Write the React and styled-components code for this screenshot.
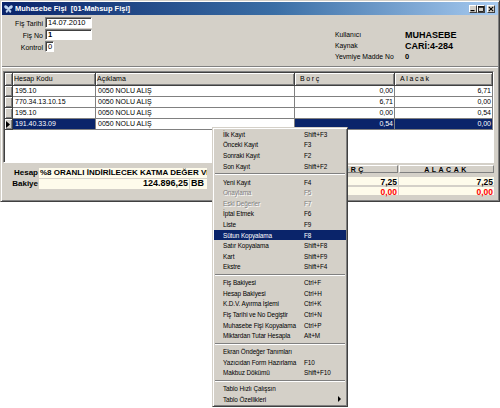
import React from 'react';
import styled, { createGlobalStyle } from 'styled-components';

const Global = createGlobalStyle`
  html, body { margin: 0; padding: 0; background: #fff; }
  body { font-family: "Liberation Sans", Arial, sans-serif; font-size: 7px; color: #000; }
  * { box-sizing: border-box; }
`;

const Page = styled.div`
  position: relative;
  width: 500px;
  height: 408px;
  background: #fff;
  overflow: hidden;
`;

const Window = styled.div`
  width: 500px;
  height: 202px;
  background: #d4d0c8;
  border: 1px solid;
  border-color: #d4d0c8 #404040 #404040 #d4d0c8;
  box-shadow: inset 1px 1px #fff, inset -1px -1px #808080;
  padding: 1px;
  display: flex;
  flex-direction: column;
`;

const TitleBar = styled.div`
  height: 13px;
  flex: none;
  display: flex;
  align-items: center;
  padding: 0 3px 0 2px;
  background: linear-gradient(to right, #0a246a 0%, #3a6ea5 55%, #a6caf0 100%);
`;

const TitleText = styled.span`
  color: #fff;
  font-weight: bold;
  font-size: 7.5px;
  margin-left: 2px;
  white-space: pre;
`;

const TitleButtons = styled.div`
  margin-left: auto;
  display: flex;
`;

const TitleButton = styled.div`
  width: 8px;
  height: 8px;
  margin-left: ${p => (p.$gap ? '2px' : '0')};
  background: #d4d0c8;
  border: 1px solid;
  border-color: #fff #404040 #404040 #fff;
  display: flex;
  align-items: center;
  justify-content: center;
`;

const FormPanel = styled.div`
  height: 53px;
  flex: none;
  display: grid;
  grid-template-columns: 333px 1fr;
  padding-top: 2px;
  border-bottom: 1px solid #fff;
  box-shadow: 0 -1px 0 #808080 inset;
`;

const FieldList = styled.div`
  display: grid;
  grid-template-columns: 41px auto;
  grid-auto-rows: 12px;
  column-gap: 2px;
  align-content: start;
  justify-items: start;
`;

const FieldLabel = styled.span`
  justify-self: end;
  align-self: center;
  line-height: 11px;
  font-size: 7px;
`;

const Input = styled.div`
  width: ${p => p.$w}px;
  height: 11px;
  background: #fff;
  border: 1px solid;
  border-color: #808080 #fff #fff #808080;
  box-shadow: inset 1px 1px #404040;
  padding: 0 0 0 2px;
  font-size: 7.5px;
  line-height: 10px;
  font-weight: ${p => (p.$bold ? 'bold' : 'normal')};
  white-space: nowrap;
`;

const InfoList = styled.div`
  display: grid;
  grid-template-columns: 70px auto;
  grid-auto-rows: 11px;
  margin-top: 12px;
  align-content: start;
  align-items: center;
`;

const InfoLabel = styled.span`
  font-size: 6.8px;
`;

const InfoValue = styled.span`
  font-weight: bold;
  font-size: ${p => p.$size || 9}px;
`;

const GridBox = styled.div`
  margin: 3px 4px 0 1px;
  height: 92px;
  flex: none;
  background: #fff;
  border: 1px solid;
  border-color: #808080 #fff #fff #808080;
  box-shadow: inset 1px 1px #404040;
  padding: 1px 0 0 1px;
  overflow: hidden;
`;

const GridRow = styled.div`
  display: grid;
  grid-template-columns: 8px 83px 199px 100px 98px;
  height: ${p => (p.$header ? 13 : 11)}px;
`;

const HeadCell = styled.div`
  background: #d4d0c8;
  border-right: 1px solid #404040;
  border-bottom: 1px solid #404040;
  box-shadow: inset 1px 1px #fff, inset -1px -1px #808080;
  padding-left: ${p => p.$pad || 2}px;
  letter-spacing: ${p => p.$ls || 0}px;
  font-size: 7px;
  line-height: 12px;
  white-space: nowrap;
  overflow: hidden;
`;

const Indicator = styled.div`
  background: #d4d0c8;
  border-right: 1px solid #404040;
  border-bottom: 1px solid #404040;
  box-shadow: inset 1px 1px #fff, inset -1px -1px #808080;
  display: flex;
  align-items: center;
  padding-left: 1px;
`;

const Cell = styled.div`
  background: ${p => (p.$sel ? '#0a246a' : '#fff')};
  color: ${p => (p.$sel ? '#fff' : '#000')};
  border-right: 1px solid #808080;
  border-bottom: 1px solid #808080;
  text-align: ${p => (p.$num ? 'right' : 'left')};
  padding: 0 ${p => (p.$num ? 1 : 0)}px 0 ${p => (p.$num ? 0 : 2)}px;
  font-size: 7px;
  line-height: 10px;
  white-space: nowrap;
  overflow: hidden;
`;

const BottomPanel = styled.div`
  flex: 1;
  display: flex;
  align-items: flex-start;
  padding: 0 4px 0 0;
`;

const AccountBlock = styled.div`
  margin-top: 5px;
  display: grid;
  grid-template-columns: 37px 168px;
  grid-auto-rows: 9.5px;
  row-gap: 1.5px;
  align-items: center;
`;

const SumLabel = styled.span`
  justify-self: end;
  font-weight: bold;
  font-size: 8px;
  padding-right: 1px;
`;

const InfoField = styled.div`
  height: 9.5px;
  background: #fefbeb;
  font-weight: bold;
  font-size: ${p => p.$size || 8}px;
  line-height: 9.5px;
  padding: 0 1px;
  white-space: nowrap;
  overflow: hidden;
  text-align: ${p => (p.$right ? 'right' : 'left')};
`;

const BalanceRow = styled.div`
  display: grid;
  grid-template-columns: 150px 17px;
  column-gap: 1px;
`;

const TotalsBlock = styled.div`
  margin: 2px 0 0 auto;
  display: grid;
  grid-template-columns: 95px 95px;
  column-gap: 1px;
  grid-template-rows: 10px 10px 10px;
`;

const TotalsHead = styled.div`
  background: #d4d0c8;
  border: 1px solid;
  border-color: #fff #808080 #808080 #fff;
  font-weight: bold;
  font-size: 7px;
  letter-spacing: 2.5px;
  text-align: center;
  line-height: 8px;
  margin-bottom: 2px;
`;

const TotalsValue = styled.div`
  background: #fefbeb;
  color: ${p => (p.$red ? '#ff0000' : '#000')};
  font-weight: bold;
  font-size: 8.5px;
  text-align: right;
  line-height: 10px;
  padding-right: 1px;
  margin-top: 2px;
`;

const Menu = styled.div`
  position: absolute;
  left: 212px;
  top: 127px;
  width: 136px;
  background: #d4d0c8;
  border: 1px solid;
  border-color: #d4d0c8 #404040 #404040 #d4d0c8;
  box-shadow: inset 1px 1px #fff, inset -1px -1px #808080;
  padding: 1px;
  display: flex;
  flex-direction: column;
`;

const MenuItem = styled.div`
  height: 10.6px;
  display: grid;
  grid-template-columns: 81px 1fr 8px;
  align-items: center;
  padding-left: 9px;
  font-size: 6.4px;
  letter-spacing: -0.1px;
  white-space: nowrap;
  background: ${p => (p.$active ? '#0a246a' : 'transparent')};
  color: ${p => (p.$active ? '#fff' : p.$disabled ? '#808080' : '#000')};
  text-shadow: ${p => (p.$disabled ? '1px 1px 0 #fff' : 'none')};
`;

const Separator = styled.div`
  height: 5.4px;
  display: flex;
  align-items: center;
  padding: 0 1px;
  &::after {
    content: '';
    flex: 1;
    height: 0;
    border-top: 1px solid #808080;
    border-bottom: 1px solid #fff;
  }
`;

const Arrow = () => (
  <svg width="4" height="6" viewBox="0 0 4 6">
    <path d="M0 0 L3 3 L0 6 Z" fill="#000" />
  </svg>
);

const AppIcon = () => (
  <svg width="9" height="8" viewBox="0 0 9 8">
    <path d="M4.5 3 C3 0 0 0 0.5 2 C1 4 3 4 4.5 4 C3 4.5 1 6 2.5 7.5 C3.5 8 4 6 4.5 5 C5 6 5.5 8 6.5 7.5 C8 6 6 4.5 4.5 4 C6 4 8 4 8.5 2 C9 0 6 0 4.5 3 Z" fill="#b9d4f2" stroke="#e8f0fb" strokeWidth="0.4" />
  </svg>
);

const rows = [
  { code: '195.10', desc: '0050 NOLU ALIŞ', borc: '0,00', alacak: '6,71' },
  { code: '770.34.13.10.15', desc: '0050 NOLU ALIŞ', borc: '6,71', alacak: '0,00' },
  { code: '195.10', desc: '0050 NOLU ALIŞ', borc: '0,00', alacak: '0,54' },
  { code: '191.40.33.09', desc: '0050 NOLU ALIŞ', borc: '0,54', alacak: '0,00', sel: true },
];

const menu = [
  ['İlk Kayıt', 'Shift+F3'],
  ['Önceki Kayıt', 'F3'],
  ['Sonraki Kayıt', 'F2'],
  ['Son Kayıt', 'Shift+F2'],
  '-',
  ['Yeni Kayıt', 'F4'],
  ['Onaylama', 'F5', 'disabled'],
  ['Eski Değerler', 'F7', 'disabled'],
  ['İptal Etmek', 'F6'],
  ['Liste', 'F9'],
  ['Sütun Kopyalama', 'F8', 'active'],
  ['Satır Kopyalama', 'Shift+F8'],
  ['Kart', 'Shift+F9'],
  ['Ekstre', 'Shift+F4'],
  '-',
  ['Fiş Bakiyesi', 'Ctrl+F'],
  ['Hesap Bakiyesi', 'Ctrl+H'],
  ['K.D.V. Ayırma İşlemi', 'Ctrl+K'],
  ['Fiş Tarihi ve No Degiştir', 'Ctrl+N'],
  ['Muhasebe Fişi Kopyalama', 'Ctrl+P'],
  ['Miktardan Tutar Hesapla', 'Alt+M'],
  '-',
  ['Ekran Öndeğer Tanımları', ''],
  ['Yazıcıdan Form Hazırlama', 'F10'],
  ['Makbuz Dökümü', 'Shift+F10'],
  '-',
  ['Tablo Hızlı Çalışsın', ''],
  ['Tablo Özellikleri', '', 'sub'],
];

export default function App() {
  return (
    <Page>
      <Global />
      <Window>
        <TitleBar>
          <AppIcon />
          <TitleText>Muhasebe Fişi  [01-Mahsup Fişi]</TitleText>
          <TitleButtons>
            <TitleButton>
              <svg width="6" height="6" viewBox="0 0 6 6"><rect x="0.5" y="4" width="4" height="1.2" fill="#000" /></svg>
            </TitleButton>
            <TitleButton>
              <svg width="6" height="6" viewBox="0 0 6 6"><rect x="0.5" y="0.5" width="5" height="5" fill="none" stroke="#000" strokeWidth="0.8" /><rect x="0.5" y="0.5" width="5" height="1.2" fill="#000" /></svg>
            </TitleButton>
            <TitleButton $gap>
              <svg width="6" height="6" viewBox="0 0 6 6"><path d="M0.8 0.8 L5.2 5.2 M5.2 0.8 L0.8 5.2" stroke="#000" strokeWidth="1.1" /></svg>
            </TitleButton>
          </TitleButtons>
        </TitleBar>

        <FormPanel>
          <FieldList>
            <FieldLabel>Fiş Tarihi</FieldLabel>
            <Input $w={47}>14.07.2010</Input>
            <FieldLabel>Fiş No</FieldLabel>
            <Input $w={47} $bold>1</Input>
            <FieldLabel>Kontrol</FieldLabel>
            <Input $w={9}>0</Input>
          </FieldList>
          <InfoList>
            <InfoLabel>Kullanıcı</InfoLabel>
            <InfoValue>MUHASEBE</InfoValue>
            <InfoLabel>Kaynak</InfoLabel>
            <InfoValue>CARİ:4-284</InfoValue>
            <InfoLabel>Yevmiye Madde No</InfoLabel>
            <InfoValue $size={7.5}>0</InfoValue>
          </InfoList>
        </FormPanel>

        <GridBox>
          <GridRow $header>
            <HeadCell />
            <HeadCell $pad={1}>Hesap Kodu</HeadCell>
            <HeadCell $pad={1}>Açıklama</HeadCell>
            <HeadCell $pad={5} $ls={1.6}>Borç</HeadCell>
            <HeadCell $pad={5} $ls={1.6}>Alacak</HeadCell>
          </GridRow>
          {rows.map((r, i) => (
            <GridRow key={i}>
              <Indicator>
                {r.sel && (
                  <svg width="4" height="7" viewBox="0 0 4 7"><path d="M0 0 L4 3.5 L0 7 Z" fill="#000" /></svg>
                )}
              </Indicator>
              <Cell $sel={r.sel}>{r.code}</Cell>
              <Cell>{r.desc}</Cell>
              <Cell $num $sel={r.sel}>{r.borc}</Cell>
              <Cell $num $sel={r.sel}>{r.alacak}</Cell>
            </GridRow>
          ))}
        </GridBox>

        <BottomPanel>
          <AccountBlock>
            <SumLabel>Hesap</SumLabel>
            <InfoField>%8 ORANLI İNDİRİLECEK KATMA DEĞER VERGİSİ</InfoField>
            <SumLabel>Bakiye</SumLabel>
            <BalanceRow>
              <InfoField $right $size={9}>124.896,25</InfoField>
              <InfoField $size={9}>BB</InfoField>
            </BalanceRow>
          </AccountBlock>
          <TotalsBlock>
            <TotalsHead>BORÇ</TotalsHead>
            <TotalsHead>ALACAK</TotalsHead>
            <TotalsValue>7,25</TotalsValue>
            <TotalsValue>7,25</TotalsValue>
            <TotalsValue $red>0,00</TotalsValue>
            <TotalsValue $red>0,00</TotalsValue>
          </TotalsBlock>
        </BottomPanel>
      </Window>

      <Menu>
        {menu.map((m, i) =>
          m === '-' ? (
            <Separator key={i} />
          ) : (
            <MenuItem key={i} $active={m[2] === 'active'} $disabled={m[2] === 'disabled'}>
              <span>{m[0]}</span>
              <span>{m[1]}</span>
              <span>{m[2] === 'sub' && <Arrow />}</span>
            </MenuItem>
          )
        )}
      </Menu>
    </Page>
  );
}
